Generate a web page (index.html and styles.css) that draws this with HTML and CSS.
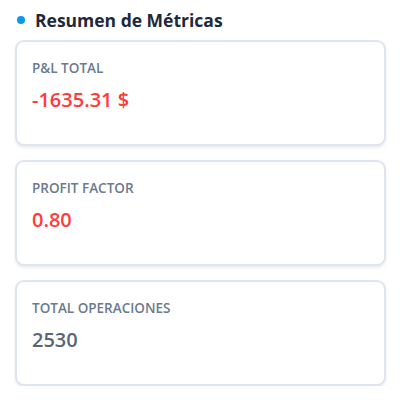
FILE: index.html
```html
<!DOCTYPE html>
<html lang="es">
<head>
    <meta charset="UTF-8">
    <meta name="viewport" content="width=device-width, initial-scale=1.0">
    <title>Resumen de Métricas</title>
    <link rel="stylesheet" href="styles.css">
</head>
<body>
    <div class="metrics-panel">
        <h3 class="panel-title"><span class="title-dot"></span>Resumen de Métricas</h3>

        <div class="metric-card">
            <div class="metric-label">P&amp;L TOTAL</div>
            <div class="metric-value negative">-1635.31 $</div>
        </div>

        <div class="metric-card">
            <div class="metric-label">PROFIT FACTOR</div>
            <div class="metric-value negative">0.80</div>
        </div>

        <div class="metric-card">
            <div class="metric-label">TOTAL OPERACIONES</div>
            <div class="metric-value">2530</div>
        </div>
    </div>
</body>
</html>
```

FILE: styles.css
```css
* {
    margin: 0;
    padding: 0;
    box-sizing: border-box;
    font-family: "Open Sans", "Noto Sans", Arial, sans-serif;
}

body {
    background: #ffffff;
    color: #1f2937;
}

.metrics-panel {
    display: flex;
    flex-direction: column;
    gap: 14px;
    padding: 8px 14px 0 15px;
}

.panel-title {
    display: flex;
    align-items: center;
    gap: 10px;
    font-size: 17.5px;
    font-weight: 700;
    color: #1e293b;
    line-height: 24px;
    margin-bottom: -6px;
    padding-left: 2px;
}

.title-dot {
    width: 8px;
    height: 8px;
    border-radius: 50%;
    background: #0d96f2;
}

.metric-card {
    height: 106px;
    border: 2px solid #dfe5ec;
    border-radius: 9px;
    background: #ffffff;
    box-shadow: 0 2px 3px rgba(0, 0, 0, 0.08);
    padding: 16px 15px;
}

.metric-label {
    font-size: 13.5px;
    font-weight: 600;
    color: #6b7a8d;
    line-height: 20px;
}

.metric-value {
    margin-top: 8px;
    font-size: 20px;
    font-weight: 600;
    color: #5b6675;
    line-height: 28px;
}

.metric-value.negative {
    color: #ff3b3b;
}
```
